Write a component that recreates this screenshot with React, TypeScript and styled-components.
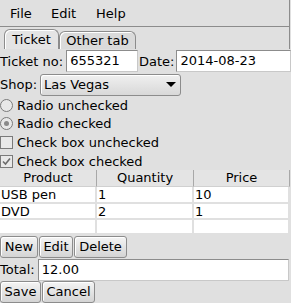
import { FC } from 'react'
import styled, { createGlobalStyle } from 'styled-components'

const GlobalStyle = createGlobalStyle`
  html, body {
    margin: 0;
    padding: 0;
    background: #e0e0e0;
  }
  body {
    font-family: 'DejaVu Sans', sans-serif;
    font-size: 13px;
    color: #000;
  }
`

const Window = styled.div`
  width: 291px;
  height: 303px;
  display: flex;
  flex-direction: column;
  background: #e0e0e0;
  overflow: hidden;
`

const MenuBar = styled.div`
  display: flex;
  height: 27px;
  box-sizing: border-box;
  width: 290px;
  border-right: 1px solid #8c8c8c;
  border-bottom: 1px solid #8c8c8c;
  align-items: center;
  padding: 2px 0 0 10px;
`

const MenuItem = styled.div<{ $w: number }>`
  width: ${(p) => p.$w}px;
  line-height: 16px;
`

const TabStrip = styled.div`
  display: flex;
  align-items: flex-end;
  box-sizing: border-box;
  width: 290px;
  height: 22px;
  padding: 2px 0 0 4px;
  border-right: 1px solid #8c8c8c;
`

const Tab = styled.div<{ $active?: boolean }>`
  box-sizing: border-box;
  height: ${(p) => (p.$active ? 20 : 18)}px;
  width: ${(p) => (p.$active ? 55 : 77)}px;
  text-align: center;
  border: 1px solid #8c8c8c;
  border-bottom: none;
  border-radius: 6px 6px 0 0;
  background: ${(p) => (p.$active ? '#e4e4e4' : '#dadada')};
  box-shadow: inset 1px 1px 0 #ffffff;
  line-height: ${(p) => (p.$active ? 19 : 17)}px;
`

const Body = styled.div`
  display: flex;
  flex-direction: column;
`

const Row = styled.div<{ $h: number }>`
  display: flex;
  align-items: center;
  height: ${(p) => p.$h}px;
`

const Label = styled.span<{ $ml?: number; $mr?: number }>`
  margin-left: ${(p) => p.$ml ?? 0}px;
  margin-right: ${(p) => p.$mr ?? 3}px;
  white-space: nowrap;
`

const Entry = styled.div<{ $w: number }>`
  box-sizing: border-box;
  height: 22px;
  width: ${(p) => p.$w}px;
  background: #fff;
  border: 1px solid #8c8c8c;
  border-right-color: #c8c8c8;
  border-bottom-color: #c8c8c8;
  padding: 0 3px;
  line-height: 20px;
`

const Select = styled.div`
  box-sizing: border-box;
  width: 141px;
  height: 22px;
  display: flex;
  align-items: center;
  justify-content: space-between;
  padding: 0 4px 0 3px;
  border: 1px solid #8c8c8c;
  border-radius: 3px;
  background: linear-gradient(#f0f0f0, #d8d8d8);
  box-shadow: inset 1px 1px 0 #fff;
`

const Arrow = styled.span`
  width: 0;
  height: 0;
  border-left: 5px solid transparent;
  border-right: 5px solid transparent;
  border-top: 5px solid #000;
`

const Option = styled.div<{ $h: number }>`
  display: flex;
  align-items: center;
  height: ${(p) => p.$h}px;
  gap: 4px;
`

const RadioMark = styled.span<{ $checked?: boolean }>`
  box-sizing: border-box;
  width: 13px;
  height: 13px;
  border-radius: 50%;
  border: 1px solid #7a7a7a;
  background: #e8e8e8;
  display: flex;
  align-items: center;
  justify-content: center;
  &::after {
    content: '';
    display: ${(p) => (p.$checked ? 'block' : 'none')};
    width: 5px;
    height: 5px;
    border-radius: 50%;
    background: #8a8a8a;
  }
`

const CheckMark = styled.span`
  box-sizing: border-box;
  width: 13px;
  height: 13px;
  border: 1px solid #7a7a7a;
  background: #e8e8e8;
  display: flex;
  align-items: center;
  justify-content: center;
`

const Table = styled.div`
  width: 290px;
  display: grid;
  grid-template-columns: 97px 97px 96px;
  grid-template-rows: 17px 17px 16px 15px;
  background: #fff;
`

const HeadCell = styled.div`
  background: #e4e4e4;
  border-right: 1px solid #a8a8a8;
  border-bottom: 1px solid #d0d0d0;
  text-align: center;
  line-height: 16px;
`

const Cell = styled.div`
  border-right: 2px solid #e0e0e0;
  border-bottom: 2px solid #e0e0e0;
  box-sizing: border-box;
  padding-left: 1px;
  line-height: 15px;
  white-space: nowrap;
`

const ButtonRow = styled.div<{ $h: number }>`
  display: flex;
  height: ${(p) => p.$h}px;
  align-items: center;
  gap: 1px;
`

const Button = styled.div<{ $w: number }>`
  box-sizing: border-box;
  height: 22px;
  width: ${(p) => p.$w}px;
  text-align: center;
  border: 1px solid #8c8c8c;
  border-radius: 3px;
  background: linear-gradient(#f4f4f4, #d4d4d4);
  box-shadow: inset 1px 1px 0 #fff;
  line-height: 20px;
`

const products = [
  { name: 'USB pen', qty: '1', price: '10' },
  { name: 'DVD', qty: '2', price: '1' },
  { name: '', qty: '', price: '' },
]

const App: FC = () => (
  <Window>
    <GlobalStyle />
    <MenuBar>
      <MenuItem $w={41}>File</MenuItem>
      <MenuItem $w={45}>Edit</MenuItem>
      <MenuItem $w={40}>Help</MenuItem>
    </MenuBar>
    <TabStrip>
      <Tab $active>Ticket</Tab>
      <Tab>Other tab</Tab>
    </TabStrip>
    <Body>
      <Row $h={24}>
        <Label>Ticket no:</Label>
        <Entry $w={72}>655321</Entry>
        <Label $ml={1} $mr={2}>Date:</Label>
        <Entry $w={115}>2014-08-23</Entry>
      </Row>
      <Row $h={23}>
        <Label>Shop:</Label>
        <Select>
          Las Vegas
          <Arrow />
        </Select>
      </Row>
      <Option $h={18}>
        <RadioMark />
        Radio unchecked
      </Option>
      <Option $h={19}>
        <RadioMark $checked />
        Radio checked
      </Option>
      <Option $h={19}>
        <CheckMark />
        Check box unchecked
      </Option>
      <Option $h={18}>
        <CheckMark>
          <svg width="9" height="9" viewBox="0 0 9 9">
            <path d="M1 4.5 L3.5 7 L8 1.5" stroke="#6a6a6a" strokeWidth="1.6" fill="none" />
          </svg>
        </CheckMark>
        Check box checked
      </Option>
      <Table>
        <HeadCell>Product</HeadCell>
        <HeadCell>Quantity</HeadCell>
        <HeadCell>Price</HeadCell>
        {products.map((p, i) => [
          <Cell key={'n' + i}>{p.name}</Cell>,
          <Cell key={'q' + i}>{p.qty}</Cell>,
          <Cell key={'p' + i}>{p.price}</Cell>,
        ])}
      </Table>
      <ButtonRow $h={23}>
        <Button $w={38}>New</Button>
        <Button $w={34}>Edit</Button>
        <Button $w={53}>Delete</Button>
      </ButtonRow>
      <Row $h={23}>
        <Label>Total:</Label>
        <Entry $w={251}>12.00</Entry>
      </Row>
      <ButtonRow $h={22}>
        <Button $w={41}>Save</Button>
        <Button $w={53}>Cancel</Button>
      </ButtonRow>
    </Body>
  </Window>
)

export default App
